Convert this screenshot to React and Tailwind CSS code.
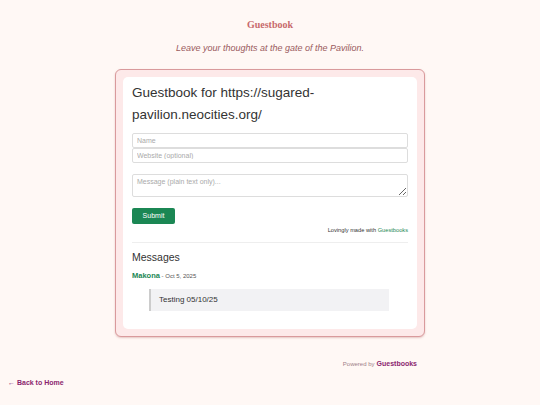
export default function App() {
  return (
    <div className="min-h-[405px] bg-[#fff8f5] font-['Liberation_Sans',Arial,sans-serif] text-[#333]">
      <header className="pt-[18px] text-center">
        <h1 className="font-['Liberation_Serif',serif] text-[10px] font-bold leading-[14px] text-[#c86a6c]">Guestbook</h1>
        <p className="mt-[9px] text-[9px] italic leading-[14px] text-[#9a5a5e]">
          Leave your thoughts at the gate of the Pavilion.
        </p>
      </header>

      <div className="mx-auto mt-[14px] w-[310px] rounded-[6px] border border-[#d99a9c] bg-[#fde9e9] p-[7px] shadow-[0_1px_2px_rgba(180,100,100,0.35)]">
        <div className="rounded-[5px] bg-white px-[9px] pb-[8px] pt-[5px]">
          <h2 className="text-[13.5px] leading-[22px] text-[#333]">
            Guestbook for https://sugared-pavilion.neocities.org/
          </h2>

          <form className="mt-[7px] flex flex-col" onSubmit={(e) => e.preventDefault()}>
            <input
              placeholder="Name"
              className="h-[15px] w-full rounded-[2px] border border-[#ddd] px-[4px] text-[7px] outline-none placeholder:text-[#aaa]"
            />
            <input
              placeholder="Website (optional)"
              className="h-[15px] w-full rounded-[2px] border border-[#ddd] px-[4px] text-[7px] outline-none placeholder:text-[#aaa]"
            />
            <textarea
              placeholder="Message (plain text only)..."
              className="mt-[11px] h-[23px] w-full rounded-[2px] border border-[#ddd] px-[4px] py-[2px] text-[7px] leading-[9px] outline-none placeholder:text-[#aaa]"
            />
            <button className="mt-[11px] h-[16px] w-[43px] rounded-[2px] bg-[#1b8754] text-[7px] text-white">
              Submit
            </button>
          </form>

          <p className="mt-[2px] text-right text-[5.7px] leading-[9px] text-[#333]">
            Lovingly made with <a className="text-[#1b8754]">Guestbooks</a>
          </p>

          <hr className="mt-[7px] border-t border-[#eee]" />

          <h3 className="mt-[7px] text-[10.5px] leading-[15px] text-[#333]">Messages</h3>

          <div className="mt-[6px] text-[6px] leading-[9px]">
            <span className="text-[7.5px] font-bold text-[#1b8754]">Makona</span>
            <span className="text-[#555]"> - Oct 5, 2025</span>
          </div>

          <div className="ml-[17px] mr-[19px] mt-[8px] border-l-2 border-[#ccc] bg-[#f2f2f4] px-[8px] py-[6px] text-[8px] leading-[10px] text-[#333]">
            Testing 05/10/25
          </div>
          <div className="h-[10px]" />
        </div>
      </div>

      <div className="mx-auto mt-[22px] flex w-[310px] items-baseline justify-end pr-[8px]">
        <span className="text-[6px] text-[#a08088]">Powered by</span>
        <a className="ml-[2px] text-[7px] font-bold text-[#8b1f6e]">Guestbooks</a>
      </div>

      <a className="mt-[8px] block pl-[8px] text-[7px] font-bold leading-[10px] text-[#8b1f6e]">
        ← Back to Home
      </a>
    </div>
  );
}
